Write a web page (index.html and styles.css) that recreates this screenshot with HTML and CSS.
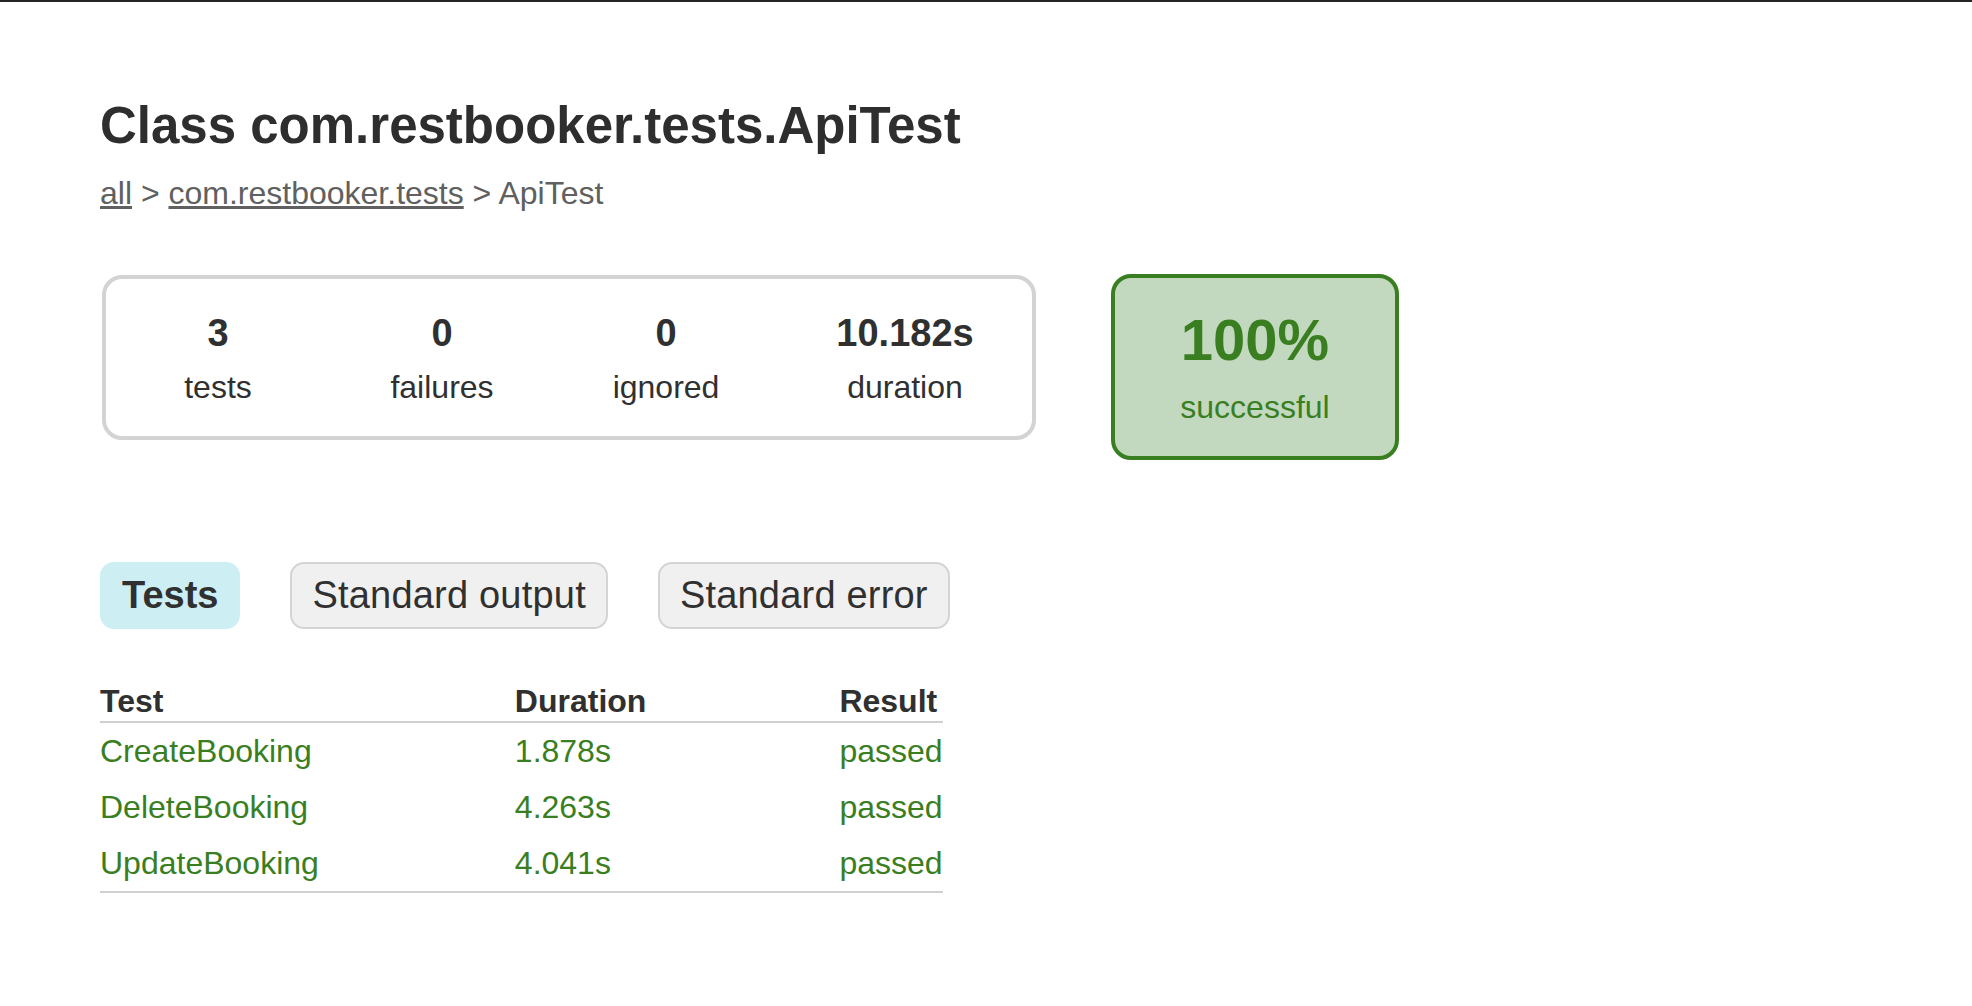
FILE: index.html
```html
<!DOCTYPE html>
<html lang="en">
<head>
<meta charset="utf-8">
<title>Test results - Class com.restbooker.tests.ApiTest</title>
<link rel="stylesheet" href="styles.css">
</head>
<body>
<div class="topbar"></div>
<div class="content">
  <h1 class="title">Class com.restbooker.tests.ApiTest</h1>
  <div class="breadcrumbs"><a href="#">all</a> &gt; <a href="#">com.restbooker.tests</a> &gt; ApiTest</div>

  <div class="summary">
    <div class="summary-group">
      <div class="info-box col-std">
        <div class="counter">3</div>
        <p class="label">tests</p>
      </div>
      <div class="info-box col-std">
        <div class="counter">0</div>
        <p class="label">failures</p>
      </div>
      <div class="info-box col-std">
        <div class="counter">0</div>
        <p class="label">ignored</p>
      </div>
      <div class="info-box col-duration">
        <div class="counter">10.182s</div>
        <p class="label">duration</p>
      </div>
    </div>
    <div class="success-rate">
      <div class="percent">100%</div>
      <p class="label">successful</p>
    </div>
  </div>

  <ul class="tab-links">
    <li class="tab selected"><span class="tab-title">Tests</span></li>
    <li class="tab"><a class="tab-link" href="#">Standard output</a></li>
    <li class="tab"><a class="tab-link" href="#">Standard error</a></li>
  </ul>

  <table class="results">
    <thead>
      <tr><th>Test</th><th>Duration</th><th class="result-col">Result</th></tr>
    </thead>
    <tbody>
      <tr><td>CreateBooking</td><td>1.878s</td><td class="result-col">passed</td></tr>
      <tr><td>DeleteBooking</td><td>4.263s</td><td class="result-col">passed</td></tr>
      <tr><td>UpdateBooking</td><td>4.041s</td><td class="result-col">passed</td></tr>
    </tbody>
  </table>
</div>
</body>
</html>
```

FILE: styles.css
```css
html, body {
  margin: 0;
  padding: 0;
  background: #ffffff;
}

body {
  font-family: "Liberation Sans", Arial, Helvetica, sans-serif;
  font-size: 32px;
  color: #303030;
}

.topbar {
  height: 2px;
  background: #262626;
}

.content {
  padding: 60px 100px;
}

.title {
  margin: 34px 0 19px 0;
  font-size: 51px;
  line-height: 60px;
  font-weight: bold;
  color: #2e2e2e;
  white-space: nowrap;
}

.breadcrumbs {
  line-height: 37px;
  color: #606060;
}

.breadcrumbs a {
  color: #606060;
  text-decoration: underline;
}

.summary {
  display: flex;
  align-items: flex-start;
  margin-top: 62px;
  margin-left: 2px;
}

.summary-group {
  display: flex;
  border: 4px solid #d3d3d3;
  border-radius: 20px;
  margin-top: 1px;
}

.info-box {
  padding: 32px 0 30px 0;
  text-align: center;
}

.col-std {
  width: 224px;
}

.col-duration {
  width: 254px;
}

.counter {
  font-size: 38px;
  font-weight: bold;
  line-height: 45px;
  margin-bottom: 13px;
}

.label {
  margin: 0;
  line-height: 37px;
}

.success-rate {
  width: 280px;
  margin-left: 75px;
  padding: 30px 0;
  text-align: center;
  background: #c2d9bf;
  border: 4px solid #3a7e22;
  border-radius: 20px;
  color: #3a7e22;
}

.percent {
  font-size: 58px;
  font-weight: bold;
  line-height: 64px;
  margin-bottom: 16px;
}

.success-rate .label {
  line-height: 38px;
}

.tab-links {
  display: flex;
  list-style: none;
  margin: 102px 0 53px 0;
  padding: 0;
}

.tab {
  padding: 10px 20px;
  margin-right: 50px;
  border: 2px solid #d4d4d4;
  border-radius: 14px;
  background: #f0f0f0;
  font-size: 38px;
  line-height: 43px;
}

.tab.selected {
  background: #cdeff4;
  border-color: #cdeff4;
}

.tab-title {
  font-weight: bold;
  color: #303030;
}

.tab-link {
  color: #303030;
  text-decoration: none;
  letter-spacing: 0.2px;
}

.results {
  border-collapse: collapse;
  border-bottom: 2px solid #d0d0d0;
}

.results th {
  text-align: left;
  white-space: nowrap;
  padding: 1px 0 1px 196px;
  line-height: 37px;
  font-weight: bold;
  border-bottom: 2px solid #d0d0d0;
}

.results td {
  white-space: nowrap;
  padding: 10px 0 10px 196px;
  line-height: 36px;
  color: #3a7e22;
}

.results th.result-col,
.results td.result-col {
  padding-left: 193px;
}

.results th:first-child,
.results td:first-child {
  padding-left: 0;
}
```
